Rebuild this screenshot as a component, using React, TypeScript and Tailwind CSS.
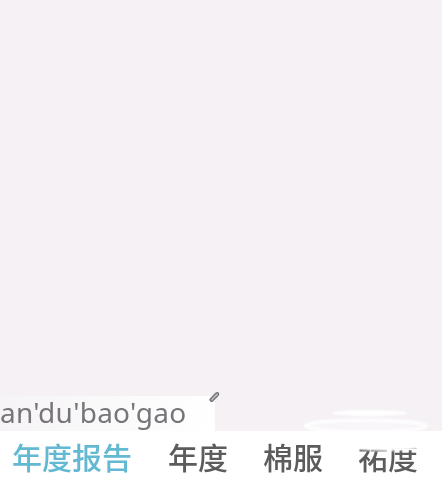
const CJK = "font-['Noto_Sans_CJK_SC','Noto_Sans',sans-serif]"

const candidates = [
  { text: '年度', className: 'ml-[36px]' },
  { text: '棉服', className: 'ml-[35px]' },
  { text: '祐度', className: 'ml-[35px]' },
]

export default function App() {
  return (
    <div className="flex h-[479px] w-[442px] flex-col overflow-hidden bg-[#f5f1f5]">
      <div className="flex-1" />

      {/* Composing text */}
      <div className="flex h-[35px] items-center">
        <div className="flex h-full w-[215px] items-center bg-gradient-to-r from-[#f6f4f6] to-white pb-[3px]">
          <span className="font-['Noto_Sans',sans-serif] text-[28px] leading-none tracking-[0.25px] text-[#77757a] blur-[0.5px]">
            an'du'bao'gao
          </span>
        </div>
        <svg className="mb-[34px] -ml-[7px] h-[12px] w-[12px] blur-[0.4px]" viewBox="0 0 12 12" fill="none">
          <path d="M2 8.5 L7.5 2.5 Q9.5 1 10.5 2.5 Q11 4 9.5 5 L4.5 10 Q2.5 11 2 8.5Z" stroke="#77757a" strokeWidth="1.4" fill="#bdbbbd" />
        </svg>
      </div>

      {/* Candidates */}
      <div className={`flex h-[48px] items-center bg-white pl-[12px] pt-[2px] text-[30px] font-medium leading-none text-[#5c5c5c] ${CJK}`}>
        <span className="text-[#63b8d2] blur-[0.5px]">年度报告</span>
        {candidates.map((c) => (
          <span key={c.text} className={`${c.className} blur-[0.5px]`}>{c.text}</span>
        ))}
      </div>

      {/* Watermark smudge over the corner */}
      <svg className="absolute left-[300px] top-[405px] h-[74px] w-[142px] blur-[1px]" viewBox="0 0 142 74" fill="none">
        <ellipse cx="70" cy="8" rx="38" ry="3" fill="#fff" />
        <ellipse cx="66" cy="21" rx="61" ry="6" stroke="#fff" strokeWidth="3" fill="#fff" fillOpacity="0.35" />
        <ellipse cx="86" cy="40" rx="40" ry="6" fill="#fff" />
      </svg>
    </div>
  )
}
